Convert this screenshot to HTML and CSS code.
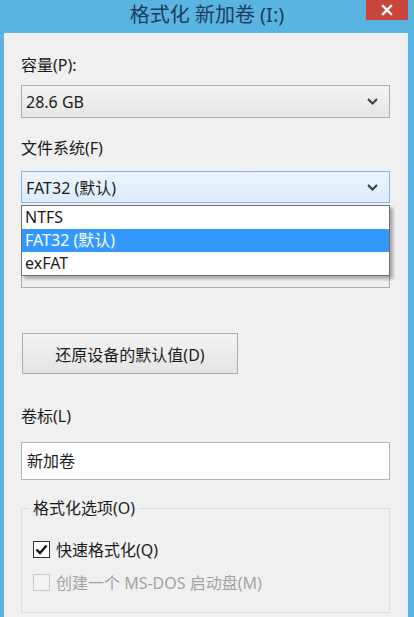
FILE: index.html
```html
<!DOCTYPE html>
<html lang="zh-CN">
<head>
  <meta charset="UTF-8">
  <meta name="viewport" content="width=device-width, initial-scale=1.0">
  <title>格式化 新加卷 (I:)</title>
  <link rel="stylesheet" href="styles.css">
</head>
<body>
  <div class="window">
    <div class="titlebar">
      <span></span>
      <div class="title">格式化 新加卷 (I:)</div>
      <button class="close" aria-label="关闭">
        <svg width="12" height="12" viewBox="0 0 12 12">
          <path d="M2 2 L10 10 M10 2 L2 10" stroke="#fff" stroke-width="2.4" stroke-linecap="square"/>
        </svg>
      </button>
    </div>

    <div class="content">
      <label class="label">容量(P):</label>
      <div class="combo">
        <span>28.6 GB</span>
        <svg class="chevron" width="11" height="7" viewBox="0 0 11 7"><path d="M1 1 L5.5 5.5 L10 1" fill="none" stroke="#3c3c3c" stroke-width="2"/></svg>
      </div>

      <label class="label">文件系统(F)</label>
      <div class="combo-wrap">
        <div class="combo open">
          <span>FAT32 (默认)</span>
          <svg class="chevron" width="11" height="7" viewBox="0 0 11 7"><path d="M1 1 L5.5 5.5 L10 1" fill="none" stroke="#3c3c3c" stroke-width="2"/></svg>
        </div>
        <ul class="dropdown">
          <li>NTFS</li>
          <li class="selected">FAT32 (默认)</li>
          <li>exFAT</li>
        </ul>
      </div>

      <div class="combo hidden-combo"></div>

      <button class="btn">还原设备的默认值(D)</button>

      <label class="label">卷标(L)</label>
      <div class="textbox">新加卷</div>

      <fieldset class="group">
        <legend>格式化选项(O)</legend>
        <div class="check">
          <span class="box checked">
            <svg width="13" height="11" viewBox="0 0 13 11"><path d="M1.5 5.5 L5 9 L11.5 1.5" fill="none" stroke="#111" stroke-width="2.4"/></svg>
          </span>
          快速格式化(Q)
        </div>
        <div class="check disabled">
          <span class="box"></span>
          创建一个 MS-DOS 启动盘(M)
        </div>
      </fieldset>
    </div>
  </div>
</body>
</html>
```

FILE: styles.css
```css
* {
  box-sizing: border-box;
}
html, body {
  margin: 0;
  height: 100%;
}
body {
  font-family: "Noto Sans", "Noto Sans CJK SC", sans-serif;
  font-size: 16px;
  color: #1b1b1b;
  background: #59b4e2;
  overflow: hidden;
}
.window {
  background: #59b4e2;
  padding: 0 6px 0 4px;
  height: 100%;
  display: flex;
  flex-direction: column;
}
.titlebar {
  height: 33px;
  flex: none;
  display: grid;
  grid-template-columns: 1fr auto 1fr;
  align-items: start;
}
.title {
  font-size: 20px;
  line-height: 30px;
  color: #1f3c5a;
  padding-left: 2px;
}
.close {
  justify-self: end;
  width: 42px;
  height: 20px;
  border: none;
  padding: 0;
  background: #c9443a;
  display: flex;
  align-items: center;
  justify-content: center;
}
.content {
  flex: 1;
  background: #f0f0f0;
  border-right: 3px solid #e4eef5;
  padding: 22px 15px 0 17px;
}
.label {
  display: block;
  line-height: 20px;
}
.combo {
  height: 33px;
  border: 1px solid #acacac;
  background: linear-gradient(#f3f3f3, #e6e6e6);
  display: flex;
  align-items: center;
  justify-content: space-between;
  padding: 0 11px 0 4px;
  margin: 10px 0 20px;
}
.combo-wrap {
  position: relative;
  margin: 13px 0 0;
}
.combo.open {
  margin: 0;
  height: 32px;
  border-color: #82b9ea;
  background: linear-gradient(#ebf4fc, #dcecfc);
}
.dropdown {
  position: absolute;
  top: 100%;
  left: 0;
  right: 0;
  margin: 2px 0 0;
  padding: 0;
  list-style: none;
  background: #fff;
  border: 1px solid #6e6e6e;
  box-shadow: 3px 3px 3px rgba(0, 0, 0, 0.3);
  z-index: 5;
}
.dropdown li {
  height: 23px;
  line-height: 23px;
  padding-left: 3px;
}
.dropdown li.selected {
  background: #3399ff;
  color: #fff;
}
.hidden-combo {
  margin: 52px 0 45px;
  background: #f0f0f0;
}
.btn {
  display: block;
  width: 216px;
  height: 41px;
  margin-left: 1px;
  border: 1px solid #acacac;
  background: linear-gradient(#f3f3f3, #e4e4e4);
  font: inherit;
  color: #1b1b1b;
  margin-bottom: 32px;
}
.textbox {
  margin-top: 16px;
  height: 38px;
  line-height: 36px;
  background: #fff;
  border: 1px solid #b4b4b4;
  padding-left: 5px;
}
.group {
  margin: 18px 0 0;
  padding: 8px 11px 20px;
  border: 1px solid #dcdcdc;
  min-width: 0;
}
.group legend {
  padding: 0 4px;
  margin-left: -4px;
  line-height: 20px;
  color: #1b1b1b;
}
.check {
  display: flex;
  align-items: center;
  gap: 6px;
  height: 20px;
  margin-top: 13px;
}
.check + .check {
  margin-top: 13px;
}
.box {
  width: 17px;
  height: 17px;
  border: 1px solid #333;
  background: #fff;
  display: flex;
  align-items: center;
  justify-content: center;
}
.check.disabled {
  color: #a3a3a3;
}
.check.disabled .box {
  border-color: #c8c8c8;
  background: #f3f3f3;
}
```
